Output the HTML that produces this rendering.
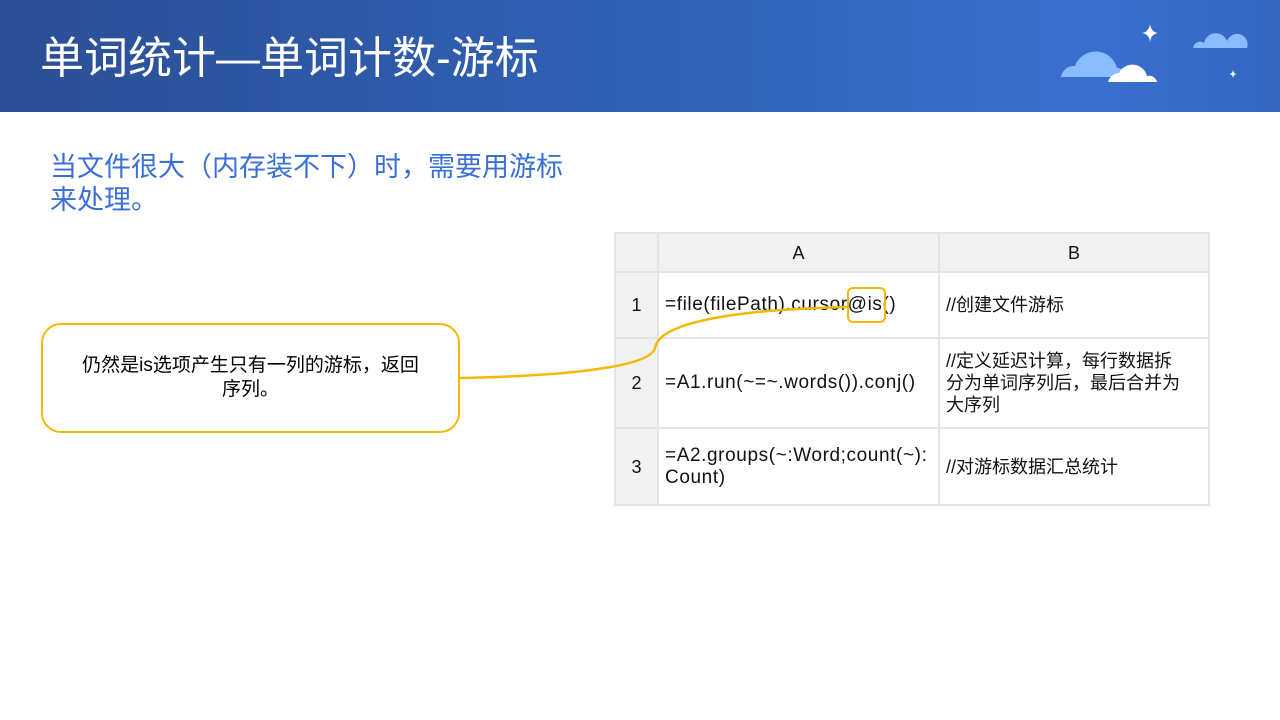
<!DOCTYPE html><html><head><meta charset="utf-8"><style>
body{margin:0;width:1280px;height:720px;position:relative;background:#fff;font-family:"Liberation Sans","Noto Sans CJK SC",sans-serif;overflow:hidden}
.hdr{position:absolute;left:0;top:0;width:1280px;height:112px;background:linear-gradient(90deg,#2b4f95 0%,#3265bd 60%,#3a6fd0 85%,#3466c2 100%)}
.title{position:absolute;left:40px;top:22px;color:#fff;font-size:44px}
.sub{position:absolute;left:50px;top:151px;color:#3a6fd6;font-size:27px;line-height:33px;width:520px}
table{position:absolute;left:614px;top:232px;border-collapse:collapse;font-size:18px;color:#111;table-layout:fixed;width:594px}
td{border:2px solid #e4e4e4;padding:0 6px;vertical-align:middle;line-height:22px;overflow:hidden}
td.a{font-size:19px;letter-spacing:0.6px}
td.b{padding-right:0}
td.b span{display:block;width:236px}
td.n{background:#f2f2f2;text-align:center}
tr.h td{background:#f2f2f2;text-align:center}
.call{position:absolute;left:41px;top:323px;width:415px;height:106px;border:2px solid #f5b800;border-radius:20px;display:flex;align-items:center;justify-content:center;text-align:center;font-size:19px;line-height:24px}
</style></head><body>
<div class="hdr">
<svg width="1280" height="112" style="position:absolute;left:0;top:0">
<path d="M1061 77 a13 13 0 0 1 14-11 a22 22 0 0 1 42 2 a10 10 0 0 1 10 9z" fill="#8bbcff"/>
<path d="M1108 82 a12 12 0 0 1 11-9 a15 15 0 0 1 28 3 a8 8 0 0 1 10 6z" fill="#fff"/>
<path d="M1193 48 a7 7 0 0 1 11-5 a12 12 0 0 1 23-2 a10 10 0 0 1 20 7z" fill="#8bbcff"/>
<path d="M1150 24 q1 8 8 9 q-7 1 -8 9 q-1 -8 -8 -9 q7 -1 8 -9z" fill="#fff"/>
<path d="M1233 70 q0.5 3.5 3.5 4 q-3 0.5 -3.5 4 q-0.5 -3.5 -3.5 -4 q3 -0.5 3.5 -4z" fill="#fff"/>
</svg>
<div class="title">单词统计—单词计数-游标</div></div>
<div class="sub">当文件很大（内存装不下）时，需要用游标来处理。</div>
<table>
<colgroup><col style="width:43px"><col style="width:281px"><col style="width:270px"></colgroup>
<tr class="h" style="height:39px"><td class="n"></td><td>A</td><td>B</td></tr>
<tr style="height:66px"><td class="n">1</td><td class="a">=file(filePath).cursor@is()</td><td class="b"><span>//创建文件游标</span></td></tr>
<tr style="height:90px"><td class="n">2</td><td class="a">=A1.run(~=~.words()).conj()</td><td class="b"><span>//定义延迟计算，每行数据拆<br>分为单词序列后，最后合并为<br>大序列</span></td></tr>
<tr style="height:77px"><td class="n">3</td><td class="a">=A2.groups(~:Word;count(~):<br>Count)</td><td class="b"><span>//对游标数据汇总统计</span></td></tr>
</table>
<div class="call">仍然是is选项产生只有一列的游标，返回<br>序列。</div>
<svg width="1280" height="720" style="position:absolute;left:0;top:0">
<path d="M459 378 C560 376 650 368 655 348 C660 318 760 309 848 307" stroke="#f5b800" stroke-width="2.5" fill="none"/>
<rect x="848" y="288" width="37" height="34" rx="5" stroke="#f5b800" stroke-width="2" fill="none"/>
</svg>
</body></html>
